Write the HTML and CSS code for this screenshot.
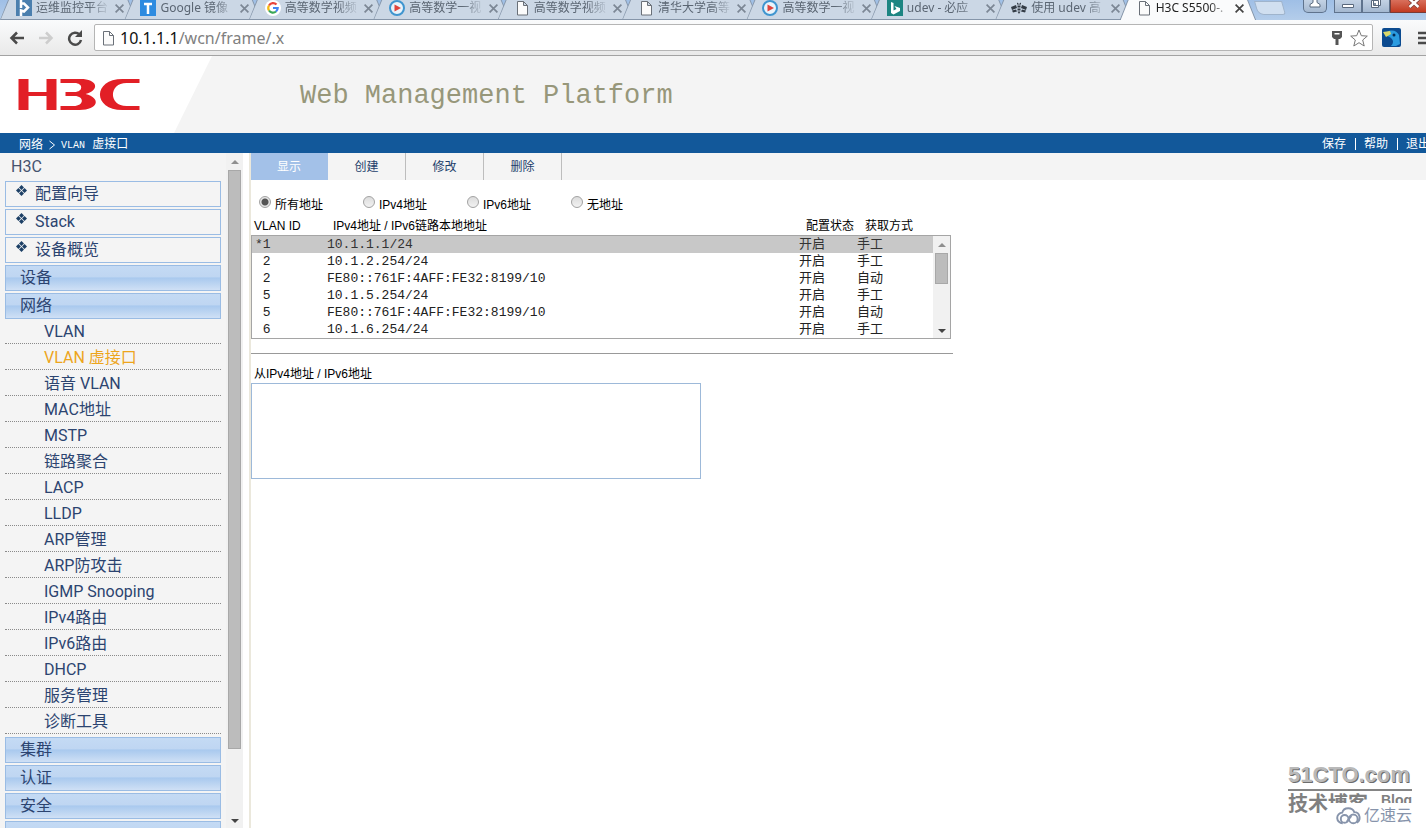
FILE: index.html
```html
<!DOCTYPE html>
<html lang="zh-CN">
<head>
<meta charset="utf-8">
<title>H3C S5500</title>
<link rel="stylesheet" href="styles.css">
</head>
<body>
<svg class="defs" width="0" height="0" aria-hidden="true">
  <symbol id="page" viewBox="0 0 16 16"><path d="M3.5 1.5h6l4 4v9.5h-10zM9.5 1.5v4h4" fill="#fbfbfb" stroke="#6a7078"/></symbol>
  <symbol id="play" viewBox="0 0 16 16"><circle cx="8" cy="8" r="7" fill="#e9f3fa" stroke="#3f95cf" stroke-width="2"/><path d="M5.5 4.500l6.500 3.500-6.500 3.500z" fill="#e0433c"/></symbol>
  <symbol id="close" viewBox="0 0 8 8"><path d="M.5.5l7 7M7.500.5l-7 7" fill="none" stroke="currentColor" stroke-width="1.500"/></symbol>
  <symbol id="clover" viewBox="0 0 12 12"><path d="M6 0l2.700 2.700L6 5.400 3.300 2.700zM6 6.600l2.700 2.700L6 12 3.300 9.300zM2.700 3.300L5.400 6 2.700 8.700 0 6zM9.300 3.300L12 6 9.300 8.700 6.600 6z" fill="#1d4066"/></symbol>
  <symbol id="up" viewBox="0 0 8 4"><path d="M4 0l4 4H0z" fill="#8f8f8f"/></symbol>
  <symbol id="down" viewBox="0 0 8 4"><path d="M0 0h8L4 4z" fill="#444"/></symbol>
</svg>

<header class="browser">
  <div class="strip">
    <div class="tabs">
      <div class="tab"><svg class="fav" viewBox="0 0 16 16"><path d="M0 0h16v16H0z" fill="#4b7fae"/><path d="M5 0v8M5 3.500h3l4 4-4 4-3-1V16" fill="none" stroke="#fff" stroke-width="2.500"/></svg><span class="name">运维监控平台</span><button class="x" aria-label="关闭"><svg><use href="#close"/></svg></button></div>
      <div class="tab"><svg class="fav" viewBox="0 0 16 16"><path d="M0 0h16v16H0z" fill="#2d8be0"/><path d="M4 4h8M8 4v10" stroke="#fff" stroke-width="2.500"/></svg><span class="name">Google 镜像</span><button class="x" aria-label="关闭"><svg><use href="#close"/></svg></button></div>
      <div class="tab"><svg class="fav" viewBox="0 0 16 16"><circle cx="8" cy="8" r="8" fill="#fff"/><g fill="none" stroke-width="2.200"><path d="M4 5.500a4.700 4.700 0 0 1 7.500-1" stroke="#e8453c"/><path d="M4 5.500a4.700 4.700 0 0 0 0 5" stroke="#f5b914"/><path d="M4 10.500a4.700 4.700 0 0 0 7 1" stroke="#3aa757"/><path d="M11 11.500a4.700 4.700 0 0 0 1.700-3.500H8" stroke="#4285f4"/></g></svg><span class="name">高等数学视频</span><button class="x" aria-label="关闭"><svg><use href="#close"/></svg></button></div>
      <div class="tab"><svg class="fav"><use href="#play"/></svg><span class="name">高等数学一视</span><button class="x" aria-label="关闭"><svg><use href="#close"/></svg></button></div>
      <div class="tab"><svg class="fav"><use href="#page"/></svg><span class="name">高等数学视频</span><button class="x" aria-label="关闭"><svg><use href="#close"/></svg></button></div>
      <div class="tab"><svg class="fav"><use href="#page"/></svg><span class="name">清华大学高等</span><button class="x" aria-label="关闭"><svg><use href="#close"/></svg></button></div>
      <div class="tab"><svg class="fav"><use href="#play"/></svg><span class="name">高等数学一视</span><button class="x" aria-label="关闭"><svg><use href="#close"/></svg></button></div>
      <div class="tab"><svg class="fav" viewBox="0 0 16 16"><path d="M0 0h16v16H0z" fill="#1d8582"/><path d="M4 2l2.500 1v7.500L9.500 9 7.500 6l5.500 2v3l-6.500 3.500L4 13z" fill="#fff"/></svg><span class="name">udev - 必应</span><button class="x" aria-label="关闭"><svg><use href="#close"/></svg></button></div>
      <div class="tab"><svg class="fav" viewBox="0 0 16 16"><path d="M0 7l5-2 1 3-5 2zM16 7l-5-2-1 3 5 2zM1 10.500l4-1 1 2-4 1zM15 10.500l-4-1-1 2 4 1zM6.500 5.500h3v2h-3zM6.500 8.500h3v2h-3zM6.500 11.500h3L8 14zM6 2.500l2 1.500 2-1.500v2H6z" fill="#333b45"/></svg><span class="name">使用 udev 高</span><button class="x" aria-label="关闭"><svg><use href="#close"/></svg></button></div>
      <div class="tab current"><svg class="fav"><use href="#page"/></svg><span class="name">H3C S5500-.</span><button class="x" aria-label="关闭"><svg><use href="#close"/></svg></button></div>
    </div>
    <button class="newtab" aria-label="新标签页"></button>
    <div class="winbtns">
      <button class="win user" aria-label="用户"><svg viewBox="0 0 12 10"><path d="M4-1h4v3.500l3 2V7H1V4.500l3-2z" fill="#fff" stroke="#59687c"/></svg></button>
      <button class="win" aria-label="最小化"><svg viewBox="0 0 12 10"><path d="M.5 4.500h11v3H.5z" fill="#fff" stroke="#59687c"/></svg></button>
      <button class="win" aria-label="还原"><svg viewBox="0 0 12 10"><path d="M3.500-1.500h7v7h-7zM1.500.5h7v7h-7zM4.500 3.500h1v1h-1z" fill="#fff" stroke="#59687c"/></svg></button>
      <button class="win shut" aria-label="关闭窗口"><svg viewBox="0 0 12 10"><path d="M1.500-1l9 8M10.500-1l-9 8" stroke="#7d3a34" stroke-width="4"/><path d="M1.500-1l9 8M10.500-1l-9 8" stroke="#fff" stroke-width="2.500"/></svg></button>
    </div>
  </div>
  <div class="toolbar">
    <button class="nav" aria-label="后退"><svg viewBox="0 0 16 16"><path d="M15 8H3M8 2.500L2.500 8 8 13.500" fill="none" stroke="#4a4a4a" stroke-width="2.500"/></svg></button>
    <button class="nav" aria-label="前进"><svg viewBox="0 0 16 16"><path d="M1 8h12M8 2.500L13.500 8 8 13.500" fill="none" stroke="#cdcdcd" stroke-width="2.500"/></svg></button>
    <button class="nav" aria-label="重新加载"><svg viewBox="0 0 16 16"><path d="M12.500 4.500A6 6 0 1 0 14 10" fill="none" stroke="#4a4a4a" stroke-width="2.500"/><path d="M15 0v7H8z" fill="#4a4a4a"/></svg></button>
    <div class="address">
      <svg class="fav"><use href="#page"/></svg>
      <span class="url"><b>10.1.1.1</b>/wcn/frame/.x</span>
      <svg class="key" viewBox="0 0 10 14"><path d="M0 0h10v6L8 8H6.500v6h-3V8H2L0 6z" fill="#555"/><path d="M2.500 2h5v1.500h-5z" fill="#fff"/></svg>
      <svg class="star" viewBox="0 0 18 18"><path d="M9 1l2.300 5.700 6 .4-4.600 3.900 1.500 6L9 13.700 3.800 17l1.500-6L.7 7.100l6-.4z" fill="#fff" stroke="#777"/></svg>
    </div>
    <svg class="ext" viewBox="0 0 19 19"><rect width="19" height="19" rx="2" fill="#0b4a8f"/><path d="M5 4c5-3 10-1 12 3l1 9-4 2H9c4-4 2-8-4-10z" fill="#2a9be0"/><path d="M1 4l7-1 1 3-5 3z" fill="#d9d76a"/><circle cx="12" cy="7" r="1.500" fill="#032a55"/></svg>
    <button class="menu" aria-label="菜单"><svg viewBox="0 0 16 14"><path d="M0 2h16M0 7h16M0 12h16" stroke="#4a4a4a" stroke-width="2.500"/></svg></button>
  </div>
</header>

<div class="banner">
  <div class="brand"><svg class="logo" viewBox="0 0 121 31" role="img" aria-label="H3C"><g fill="#e21f26"><path d="M0 0h10v13h18V0h10v31H28V17H10v14H0z"/><path d="M42 0h20c17 0 20 11 5 15 16 4 13 16-6 16H42v-4h13c11 0 11-10 1-10H47v-4h9c9 0 9-9 0-9H42z"/><path d="M121 0v4h-13c-18 0-18 23 0 23h13v4h-17C74 31 74 0 104 0z"/></g></svg></div>
  <h1 class="title">Web Management Platform</h1>
</div>
<div class="crumbs">
  <div class="path"><span>网络</span><svg viewBox="0 0 6 10"><path d="M.5 1l5 4-5 4" fill="none" stroke="#fff"/></svg><span class="here"><span class="latin">VLAN</span> 虚接口</span></div>
  <nav class="links"><a href="#">保存</a><a href="#">帮助</a><a href="#">退出</a></nav>
</div>

<div class="body">
  <aside class="side">
    <nav class="tree">
      <div class="root">H3C</div>
      <a class="node plain" href="#"><svg><use href="#clover"/></svg>配置向导</a>
      <a class="node plain" href="#"><svg><use href="#clover"/></svg>Stack</a>
      <a class="node plain" href="#"><svg><use href="#clover"/></svg>设备概览</a>
      <a class="node" href="#">设备</a>
      <a class="node" href="#">网络</a>
      <ul class="leaves">
        <li><a href="#">VLAN</a></li>
        <li><a class="on" href="#">VLAN 虚接口</a></li>
        <li><a href="#">语音 VLAN</a></li>
        <li><a href="#">MAC地址</a></li>
        <li><a href="#">MSTP</a></li>
        <li><a href="#">链路聚合</a></li>
        <li><a href="#">LACP</a></li>
        <li><a href="#">LLDP</a></li>
        <li><a href="#">ARP管理</a></li>
        <li><a href="#">ARP防攻击</a></li>
        <li><a href="#">IGMP Snooping</a></li>
        <li><a href="#">IPv4路由</a></li>
        <li><a href="#">IPv6路由</a></li>
        <li><a href="#">DHCP</a></li>
        <li><a href="#">服务管理</a></li>
        <li><a href="#">诊断工具</a></li>
      </ul>
      <a class="node" href="#">集群</a>
      <a class="node" href="#">认证</a>
      <a class="node" href="#">安全</a>
      <a class="node" href="#" aria-label="QoS"></a>
    </nav>
    <div class="bar"><svg><use href="#up"/></svg><div class="rail"><div class="thumb tall"></div></div><svg><use href="#down"/></svg></div>
  </aside>
  <main class="main">
    <nav class="views">
      <a class="view on" href="#">显示</a><a class="view" href="#">创建</a><a class="view" href="#">修改</a><a class="view" href="#">删除</a>
    </nav>
    <div class="panel">
      <div class="radios">
        <label><input type="radio" name="kind" checked><span>所有地址</span></label>
        <label><input type="radio" name="kind"><span>IPv4地址</span></label>
        <label><input type="radio" name="kind"><span>IPv6地址</span></label>
        <label><input type="radio" name="kind"><span>无地址</span></label>
      </div>
      <div class="heads"><span>VLAN ID</span><span>IPv4地址 / IPv6链路本地地址</span><span>配置状态</span><span>获取方式</span></div>
      <div class="list">
        <table class="rows">
          <colgroup><col class="c-id"><col><col class="c-state"><col class="c-mode"></colgroup>
          <tr class="picked"><td>*1</td><td>10.1.1.1/24</td><td>开启</td><td>手工</td></tr>
          <tr><td>&nbsp;2</td><td>10.1.2.254/24</td><td>开启</td><td>手工</td></tr>
          <tr><td>&nbsp;2</td><td>FE80::761F:4AFF:FE32:8199/10</td><td>开启</td><td>自动</td></tr>
          <tr><td>&nbsp;5</td><td>10.1.5.254/24</td><td>开启</td><td>手工</td></tr>
          <tr><td>&nbsp;5</td><td>FE80::761F:4AFF:FE32:8199/10</td><td>开启</td><td>自动</td></tr>
          <tr><td>&nbsp;6</td><td>10.1.6.254/24</td><td>开启</td><td>手工</td></tr>
        </table>
        <div class="bar"><svg><use href="#up"/></svg><div class="rail"><div class="thumb"></div></div><svg><use href="#down"/></svg></div>
      </div>
      <hr class="rule">
      <label class="caption" for="sub">从IPv4地址 / IPv6地址</label>
      <textarea class="sub" id="sub"></textarea>
    </div>
  </main>
</div>

<div class="mark">
  <div class="mark-site">51CTO.com</div>
  <div class="mark-sub"><span>技术博客</span><span class="blog">Blog</span></div>
  <div class="mark-cloud"><svg viewBox="0 0 26 18"><g fill="none" stroke="#8794ab" stroke-width="2"><path d="M7 16.500a5.500 5.500 0 0 1-.5-11C8-.5 17-.5 19 5c6 0 7.500 8 2.500 11"/><circle cx="9" cy="12" r="4"/><circle cx="18" cy="12" r="4.500"/><path d="M11 15l5-6"/></g></svg><span>亿速云</span></div>
</div>
</body>
</html>
```
FILE: styles.css
```css
* { box-sizing: border-box; }

body {
  margin: 0;
  height: 100vh;
  overflow: hidden;
  position: relative;
  display: flex;
  flex-direction: column;
  background: #fff;
  font: 12px/16px "Liberation Sans", "Noto Sans CJK SC", sans-serif;
  color: #000;
}

a { color: inherit; text-decoration: none; }
button { margin: 0; padding: 0; border: 0; background: none; }
svg { display: block; flex: none; }
.defs { position: absolute; }

/* Browser frame */
.browser { flex: none; }

.strip {
  display: flex;
  height: 20px;
  overflow: hidden;
  background: linear-gradient(#9fbfe6, #b4cdea);
}

.tabs { flex: 1; min-width: 0; display: flex; padding-left: 4px; }

.tab {
  flex: 1 1 0;
  min-width: 0;
  position: relative;
  z-index: 0;
  display: flex;
  align-items: center;
  gap: 4px;
  height: 20px;
  padding: 0 4px 4px 12px;
  font: 12px/16px "Noto Sans", "Noto Sans CJK SC", sans-serif;
  color: #5b6673;
}

.tab::before,
.tab::after {
  content: "";
  position: absolute;
  z-index: -1;
  top: 0;
  bottom: 0;
  left: -4px;
  right: -8px;
  background: #8595a9;
  clip-path: polygon(8px 0, calc(100% - 8px) 0, 100% 100%, 0 100%);
}

.tab::after {
  left: -3px;
  right: -7px;
  bottom: 1px;
  background: #cbd7e5;
}

.tab.current { color: #222; z-index: 1; }
.tab.current::after { background: #fafbfc; bottom: 0; }

.fav { width: 16px; height: 16px; }

.name {
  flex: 1;
  min-width: 0;
  overflow: hidden;
  white-space: nowrap;
  mask-image: linear-gradient(to right, #000 70%, transparent);
}

.x { width: 9px; height: 9px; color: #7c8795; }
.x svg { width: 9px; height: 9px; }
.current .x { color: #444; }

.newtab {
  width: 28px;
  height: 14px;
  margin: 1px 0 0 8px;
  background: #d0dff0;
  border: 1px solid #9fb4cc;
  border-radius: 0 0 3px 6px;
  transform: skewX(16deg);
}

.winbtns { display: flex; width: 142px; padding-left: 19px; overflow: hidden; }

.win {
  flex: none;
  display: flex;
  justify-content: center;
  width: 28px;
  height: 13px;
  border: 1px solid #5f738d;
  border-top: 0;
  background: linear-gradient(#c3d2e4, #a4b8d0);
}
.win svg { width: 12px; height: 10px; overflow: visible; }
.win.user { width: 24px; margin-right: 7px; border-radius: 0 0 5px 5px; }
.win.shut { width: 48px; border-color: #7a3b35; background: linear-gradient(#d9705c, #c23a20); }

.toolbar {
  display: flex;
  align-items: center;
  height: 36px;
  padding-left: 9px;
  background: linear-gradient(#fafbfc, #e9e9e9);
  border-bottom: 1px solid #a3a3a3;
  overflow: hidden;
}

.nav { width: 16px; height: 16px; margin-right: 13px; }
.nav svg { width: 16px; height: 16px; }

.address {
  flex: 1;
  display: flex;
  align-items: center;
  height: 27px;
  margin-left: -2px;
  padding: 0 4px 0 5px;
  background: #fff;
  border: 1px solid #b5b5b5;
  border-radius: 2px;
}

.url {
  flex: 1;
  margin-left: 4px;
  font: 16px/24px "Noto Sans", sans-serif;
  color: #808080;
}
.url b { font-weight: normal; color: #111; }

.key { width: 10px; height: 14px; margin-right: 8px; }
.star { width: 18px; height: 18px; }
.ext { width: 19px; height: 19px; margin: 0 17px 0 9px; }
.menu { width: 8px; height: 14px; overflow: hidden; }
.menu svg { width: 16px; height: 14px; }

/* Site header */
.banner {
  flex: none;
  display: flex;
  align-items: center;
  height: 77px;
  background: #f4f4f4;
}

.brand {
  display: flex;
  align-items: center;
  align-self: stretch;
  width: 212px;
  margin-right: 88px;
  padding-left: 18px;
  background: #fff;
  clip-path: polygon(0 0, 100% 0, 174px 100%, 0 100%);
}
.logo { width: 122px; height: 31px; }

.title {
  margin: 0;
  padding-top: 2px;
  font: 27px/32px "Liberation Mono", monospace;
  color: #97977a;
}

.crumbs {
  flex: none;
  display: flex;
  justify-content: space-between;
  height: 20px;
  padding: 4px 0 0 19px;
  overflow: hidden;
  background: #12589a;
  color: #fff;
  white-space: nowrap;
}

.path { display: flex; align-items: center; gap: 6px; }
.path svg { width: 6px; height: 10px; }
.here { font-family: "Liberation Mono", "Noto Sans CJK SC", monospace; }
.latin { font-size: 10px; }

.links { display: flex; align-items: center; margin: -3px -4px 0 0; }
.links a { line-height: 12px; }
.links a + a { margin-left: 9px; padding-left: 8px; border-left: 1px solid #fff; }

.body { flex: 1; min-height: 0; display: flex; }

/* Tree */
.side {
  flex: none;
  display: flex;
  width: 243px;
  margin-right: 6px;
  overflow: hidden;
  background: #f4f4f4;
}

.tree {
  flex: 1;
  min-width: 0;
  padding: 0 5px;
  font: 16px/24px Roboto, "Noto Sans CJK SC", sans-serif;
  color: #2c4470;
}

.root { height: 28px; padding: 2px 6px; color: #45536f; }

.node {
  display: flex;
  align-items: center;
  height: 26px;
  margin-bottom: 2px;
  padding-left: 14px;
  border: 1px solid #9abce4;
  background: linear-gradient(#c4daf4, #bfd6f2 45%, #a9c9ee 50%, #cfe0f5);
}

.node.plain { padding-left: 10px; background: #f4f4f4; }
.node svg { width: 11px; height: 11px; margin: 0 8px 8px 0; }

.leaves { margin: -3px 0 0; padding: 0 0 3px; list-style: none; }
.leaves li {
  height: 26px;
  padding-left: 39px;
  border-bottom: 1px dotted #8a8a8a;
  line-height: 27px;
}
.leaves .on { color: #eda51c; }

.bar {
  flex: none;
  display: flex;
  flex-direction: column;
  align-items: center;
  width: 17px;
  padding: 7px 0 5px;
  background: #f1f1f1;
}
.bar svg { width: 8px; height: 4px; }
.rail { flex: 1; width: 13px; margin: 6px 0; }
.thumb { width: 13px; height: 31px; background: #bcbcbc; border: 1px solid #a8a8a8; }
.thumb.tall { height: 90%; }

/* Work area */
.main { flex: 1; min-width: 0; border-left: 2px solid #ebe8dc; }

.views { display: flex; height: 27px; background: #f4f4f4; color: #1c3f6b; }
.view { width: 78px; line-height: 28px; text-align: center; border-right: 1px solid #bdbdbd; }
.view.on { width: 77px; background: #a3c1e8; color: #fff; border-color: #a3c1e8; }

.panel { display: flex; flex-direction: column; align-items: flex-start; padding-top: 14px; }

.radios { display: grid; grid-template-columns: repeat(4, 104px); padding-left: 8px; }
.radios label { display: flex; align-items: flex-start; gap: 4px; height: 24px; }
.radios input {
  appearance: none;
  width: 12px;
  height: 12px;
  margin: 2px 0 0;
  border: 1px solid #a2a2a2;
  border-radius: 50%;
  background: linear-gradient(#dcdcdc, #f2f2f2);
}
.radios input:checked { background: radial-gradient(circle, #555 3px, #e6e6e6 4px); }
.radios span { padding-top: 3px; }

.heads {
  display: grid;
  grid-template-columns: 79px 473px 59px 1fr;
  height: 17px;
  padding-left: 3px;
}

.list { display: flex; width: 700px; border: 1px solid #a5a5a5; }

.rows {
  flex: 1;
  table-layout: fixed;
  border-collapse: collapse;
  font: 13px/17px "Liberation Mono", "Noto Sans CJK SC", monospace;
  color: #222;
}
.rows td { height: 17px; padding: 0 0 0 3px; line-height: 17px; white-space: nowrap; }
.c-id { width: 72px; }
.c-state { width: 58px; }
.c-mode { width: 79px; }
.picked { background: #c8c8c8; color: #333; }

.rule { width: 702px; height: 1px; margin: 14px 0 12px; border: 0; background: #999; }
.caption { padding-left: 3px; margin-bottom: 1px; }
.sub { display: block; width: 450px; height: 96px; border: 1px solid #9db9d9; background: #fff; resize: none; }

/* Corner marks */
.mark {
  position: absolute;
  right: 14px;
  bottom: 0;
  width: 124px;
  height: 68px;
  overflow: hidden;
  color: #b9b9b9;
}
.mark-site {
  height: 31px;
  border-bottom: 2px solid #858585;
  font: bold 22px/30px "Liberation Sans", sans-serif;
  text-shadow: 1px 1px 0 #6c6c6c;
}
.mark-sub {
  display: flex;
  justify-content: space-between;
  font: bold 20px/26px "Liberation Sans", "Noto Sans CJK SC", sans-serif;
  color: #808080;
}
.mark-sub .blog { font-size: 14px; line-height: 18px; }
.mark-cloud {
  position: absolute;
  right: 0;
  bottom: 0;
  display: flex;
  align-items: center;
  gap: 3px;
  width: 84px;
  height: 25px;
  padding-left: 8px;
  background: #fff;
  font-size: 16px;
  line-height: 24px;
  color: #8794ab;
}
.mark-cloud svg { width: 25px; height: 18px; }
```
